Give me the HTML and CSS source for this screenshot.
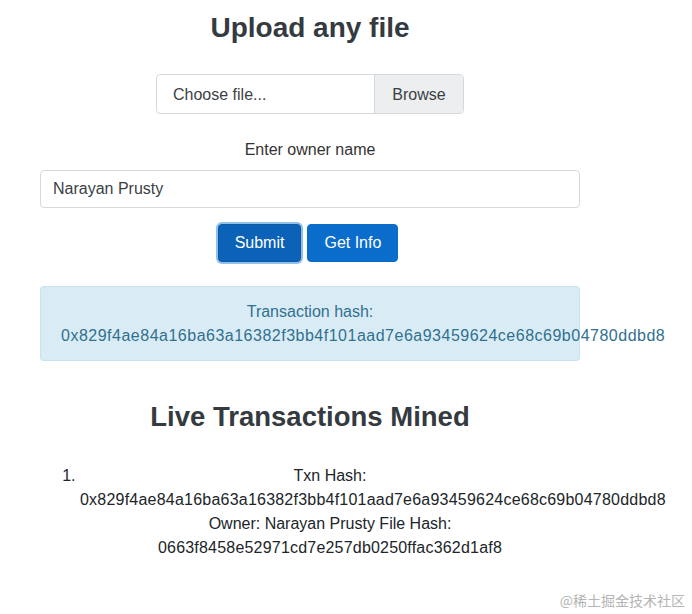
FILE: index.html
```html
<!DOCTYPE html>
<html>
<head>
<meta charset="utf-8">
<link rel="stylesheet" href="styles.css">
</head>
<body>
<div class="container">
  <h1 class="title">Upload any file</h1>
  <div class="file-row">
    <div class="custom-file">
      <span class="file-label">Choose file...</span>
      <span class="file-browse">Browse</span>
    </div>
  </div>
  <div class="owner-label">Enter owner name</div>
  <input class="owner-input" type="text" value="Narayan Prusty">
  <div class="buttons">
    <button class="btn btn-focus">Submit</button>
    <button class="btn">Get Info</button>
  </div>
  <div class="alert">
    <div>Transaction hash:</div>
    <div class="nowrap hash">0x829f4ae84a16ba63a16382f3bb4f101aad7e6a93459624ce68c69b04780ddbd8</div>
  </div>
  <h2 class="subtitle">Live Transactions Mined</h2>
  <ol class="txlist">
    <li>
      <div>Txn Hash:</div>
      <div class="nowrap listhash">0x829f4ae84a16ba63a16382f3bb4f101aad7e6a93459624ce68c69b04780ddbd8</div>
      <div>Owner: Narayan Prusty File Hash:</div>
      <div class="filehash">0663f8458e52971cd7e257db0250ffac362d1af8</div>
    </li>
  </ol>
</div>
<div class="watermark">@稀土掘金技术社区</div>
</body>
</html>
```
FILE: styles.css
```css
html, body {
  margin: 0;
  padding: 0;
  background: #ffffff;
}
body {
  font-family: "Liberation Sans", Arial, sans-serif;
  font-size: 16px;
  line-height: 1.5;
  color: #212529;
  width: 692px;
  height: 614px;
  overflow: hidden;
}
.container {
  margin-left: 40px;
  width: 540px;
  text-align: center;
}
.title {
  margin: 11px 0 0;
  font-size: 28px;
  font-weight: bold;
  line-height: 34px;
  color: #343a40;
}
.file-row {
  margin-top: 29px;
  display: flex;
  justify-content: center;
}
.custom-file {
  display: flex;
  width: 308px;
  height: 40px;
  box-sizing: border-box;
  border: 1px solid #d6d9dc;
  border-radius: 4px;
  overflow: hidden;
  text-align: left;
}
.file-label {
  flex: 1;
  padding-left: 16px;
  line-height: 39px;
  color: #3a3f44;
}
.file-browse {
  width: 89px;
  box-sizing: border-box;
  border-left: 1px solid #d6d9dc;
  background: #eceeef;
  line-height: 39px;
  text-align: center;
  color: #3a3f44;
}
.owner-label {
  margin-top: 24px;
  color: #333;
}
.owner-input {
  display: block;
  margin-top: 8px;
  width: 540px;
  height: 38px;
  box-sizing: border-box;
  border: 1px solid #d6d9dc;
  border-radius: 4px;
  padding: 6px 12px;
  font-family: inherit;
  font-size: 16px;
  color: #3a3f44;
}
.buttons {
  margin-top: 16px;
  display: flex;
  justify-content: center;
  gap: 6px;
  padding-right: 4px;
}
.btn {
  height: 38px;
  padding: 0 16px;
  border: 1px solid #0b6cc4;
  border-radius: 4px;
  background: #0a6ccb;
  color: #ffffff;
  font-family: inherit;
  font-size: 16px;
}
.btn-focus {
  background: #0c62b6;
  border-color: #0a5aa8;
  box-shadow: 0 0 0 2px #8fc1ea;
}
.alert {
  margin-top: 24px;
  padding: 13px 20px 12px;
  background: #d9ecf6;
  border: 1px dotted #b7d9ea;
  border-radius: 4px;
  color: #31708f;
  text-align: center;
}
.nowrap {
  white-space: nowrap;
}
.hash {
  letter-spacing: 0.5px;
}
.listhash {
  letter-spacing: 0.22px;
}
.filehash {
  letter-spacing: 0.2px;
}
.subtitle {
  margin: 39px 0 0;
  font-size: 27.5px;
  font-weight: bold;
  line-height: 34px;
  color: #343a40;
}
.txlist {
  margin: 30px 0 0;
  padding-left: 40px;
  text-align: center;
  color: #212529;
}
.watermark {
  position: absolute;
  right: 7px;
  bottom: 4px;
  font-family: "Noto Sans CJK SC", sans-serif;
  font-size: 14px;
  line-height: 20px;
  color: #b4b4b4;
}
```
